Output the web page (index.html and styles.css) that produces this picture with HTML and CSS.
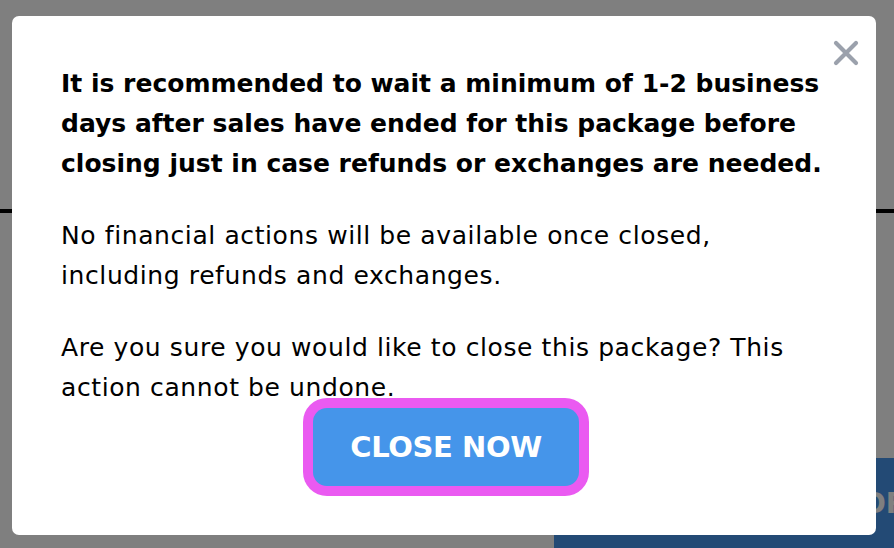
FILE: index.html
```html
<!DOCTYPE html>
<html lang="en">
<head>
  <meta charset="UTF-8">
  <meta name="viewport" content="width=device-width, initial-scale=1.0">
  <title>Close Package</title>
  <link rel="stylesheet" href="styles.css">
</head>
<body>
  <div class="page">
    <div class="page-top"></div>
    <div class="page-rule"></div>
    <div class="page-actions">
      <div class="page-btn">ORDERS</div>
    </div>
  </div>

  <div class="backdrop">
    <div class="modal">
      <button class="modal-close" type="button" aria-label="Close">
        <svg width="26" height="26" viewBox="0 0 26 26">
          <path d="M3 3 L23 23 M23 3 L3 23" stroke="#9ba1ac" stroke-width="4.2" stroke-linecap="round"/>
        </svg>
      </button>
      <p class="modal-lead">It is recommended to wait a minimum of 1-2 business<br>days after sales have ended for this package before<br>closing just in case refunds or exchanges are needed.</p>
      <p class="modal-text">No financial actions will be available once closed,<br>including refunds and exchanges.</p>
      <p class="modal-text">Are you sure you would like to close this package? This<br>action cannot be undone.</p>
      <button class="modal-confirm" type="button">CLOSE NOW</button>
    </div>
  </div>
</body>
</html>
```

FILE: styles.css
```css
body {
  margin: 0;
  font-family: "DejaVu Sans", Inter, sans-serif;
  background: #fff;
  overflow: hidden;
}

.page {
  height: 548px;
}

.page-top {
  height: 209px;
}

.page-rule {
  height: 4px;
  background: #000;
}

.page-actions {
  display: flex;
  justify-content: flex-end;
  padding-top: 245px;
}

.page-btn {
  box-sizing: border-box;
  width: 340px;
  height: 100px;
  overflow: hidden;
  white-space: nowrap;
  background: #4694ea;
  color: #fff;
  font-size: 28px;
  font-weight: 700;
  line-height: 92px;
  padding-left: 308px;
}

.backdrop {
  position: fixed;
  inset: 0;
  background: rgba(0, 0, 0, 0.5);
  padding: 16px 18px 13px 12px;
}

.modal {
  position: relative;
  box-sizing: border-box;
  height: 519px;
  background: #fff;
  border-radius: 7px;
  padding: 48px 49px 0;
  display: flex;
  flex-direction: column;
}

.modal-close {
  position: absolute;
  top: 24px;
  right: 17px;
  padding: 0;
  border: none;
  background: none;
  line-height: 0;
  cursor: pointer;
}

.modal-lead,
.modal-text {
  margin: 0 0 32px;
  font-size: 25px;
  line-height: 40px;
  color: #000;
  white-space: nowrap;
}

.modal-lead {
  font-weight: 700;
}

.modal-text {
  font-weight: 400;
  letter-spacing: 0.6px;
}

.modal-text:last-of-type {
  margin-bottom: 0;
}

.modal-confirm {
  align-self: center;
  margin: 0 0 0 4px;
  width: 266px;
  height: 78px;
  border: none;
  border-radius: 14px;
  background: #4595ea;
  box-shadow: 0 0 0 10px #ea5af1;
  color: #fff;
  font-family: inherit;
  font-size: 29px;
  font-weight: 700;
  letter-spacing: -0.4px;
  cursor: pointer;
}
```
